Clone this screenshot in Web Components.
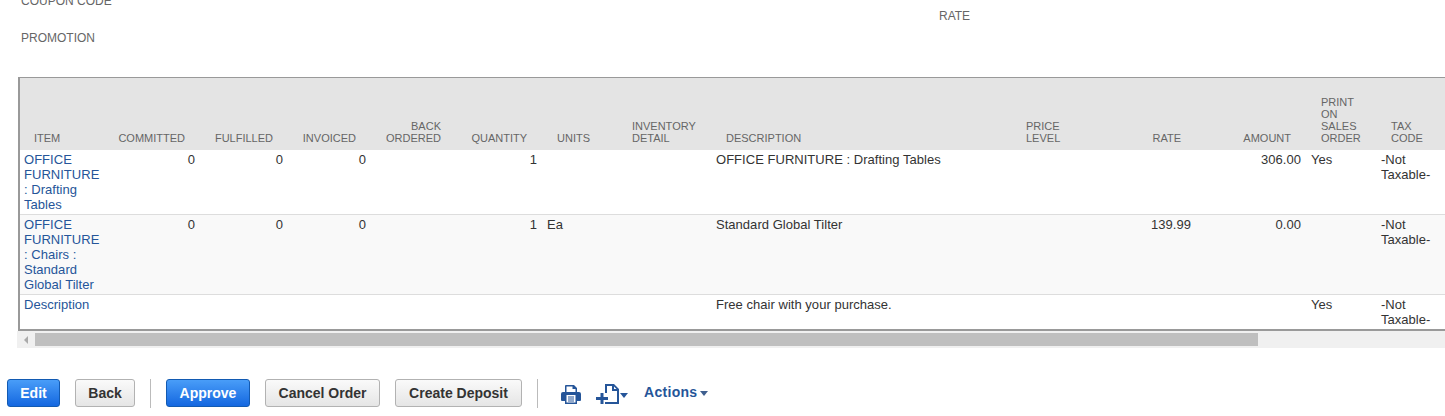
<!DOCTYPE html>
<html>
<head>
<meta charset="utf-8">
<style>
  html, body { margin: 0; height: 416px; overflow: hidden; background: #fff; }
  body { font-family: "Liberation Sans", Arial, sans-serif; }
</style>
</head>
<body>
<so-page>
  <so-fields slot="fields"></so-fields>
  <line-table slot="table"></line-table>
  <so-toolbar slot="toolbar">
    <so-button primary style="width:53px">Edit</so-button>
    <so-button style="width:60px">Back</so-button>
    <tool-sep></tool-sep>
    <so-button primary style="width:84px">Approve</so-button>
    <so-button style="width:115px">Cancel Order</so-button>
    <so-button style="width:127px">Create Deposit</so-button>
    <tool-sep></tool-sep>
    <tool-icons></tool-icons>
  </so-toolbar>
</so-page>

<script>
customElements.define('so-page', class SoPage extends HTMLElement {
  constructor() {
    super();
    this.attachShadow({mode: 'open'});
    this.shadowRoot.innerHTML = `
    <style>
      :host { display: flex; flex-direction: column; width: 1445px; height: 416px; overflow: hidden; }
    </style>
    <slot name="fields"></slot>
    <slot name="table"></slot>
    <slot name="toolbar"></slot>
    `
  }
})

customElements.define('so-fields', class SoFields extends HTMLElement {
  constructor() {
    super();
    this.attachShadow({mode: 'open'});
    this.shadowRoot.innerHTML = `
    <style>
      :host {
        display: grid;
        grid-template-columns: 918px 1fr;
        height: 77px;
        padding-left: 21px;
        box-sizing: border-box;
        font-size: 12px;
        line-height: 14px;
        color: #666;
      }
      .left { display: flex; flex-direction: column; gap: 23px; margin-top: -6px; }
      .right { padding-top: 9px; }
    </style>
    <div class="left"><div>COUPON CODE</div><div>PROMOTION</div></div>
    <div class="right"><div>RATE</div></div>
    `
  }
})

const COLUMNS = [
  ['ITEM', 84, 'l'], ['COMMITTED', 97, 'r'], ['FULFILLED', 88, 'r'], ['INVOICED', 83, 'r'],
  ['BACK<br>ORDERED', 85, 'r'], ['QUANTITY', 86, 'r'], ['UNITS', 75, 'l'], ['INVENTORY<br>DETAIL', 94, 'l'],
  ['DESCRIPTION', 300, 'l'], ['PRICE<br>LEVEL', 95, 'l'], ['RATE', 90, 'r'], ['AMOUNT', 110, 'r'],
  ['PRINT<br>ON<br>SALES<br>ORDER', 70, 'l'], ['TAX<br>CODE', 80, 'l']
]

const ROWS = [
  ['OFFICE FURNITURE : Drafting Tables', '0', '0', '0', '', '1', '', '', 'OFFICE FURNITURE : Drafting Tables', '', '', '306.00', 'Yes', '-Not Taxable-'],
  ['OFFICE FURNITURE : Chairs : Standard Global Tilter', '0', '0', '0', '', '1', 'Ea', '', 'Standard Global Tilter', '', '139.99', '0.00', '', '-Not Taxable-'],
  ['Description', '', '', '', '', '', '', '', 'Free chair with your purchase.', '', '', '', 'Yes', '-Not Taxable-']
]

customElements.define('line-table', class LineTable extends HTMLElement {
  constructor() {
    super();
    this.attachShadow({mode: 'open'});
    const cols = COLUMNS.map(c => `<col style="width:${c[1]}px">`).join('');
    const head = COLUMNS.map(c => `<th class="${c[2]}">${c[0]}</th>`).join('');
    const rows = ROWS.map(r => '<tr>' + r.map((v, i) =>
      `<td class="${COLUMNS[i][2]}${i == 0 ? ' link' : ''}">${v}</td>`).join('') + '</tr>').join('');
    this.shadowRoot.innerHTML = `
    <style>
      :host { display: block; margin-left: 17px; height: 271px; }
      .frame {
        width: 1444px;
        box-sizing: border-box;
        margin-left: 1px;
        border: solid #999;
        border-width: 1px 1px 2px 2px;
        height: 254px;
        overflow: hidden;
      }
      table {
        table-layout: fixed;
        width: 1437px;
        margin-left: -1px;
        border-collapse: collapse;
        font-size: 13px;
        letter-spacing: 0.03px;
        line-height: 15px;
        color: #333;
      }
      th {
        height: 72px;
        padding: 0 10px 6px 15px;
        box-sizing: border-box;
        background: #e4e4e4;
        color: #666;
        font-size: 11px;
        letter-spacing: 0;
        line-height: 12px;
        font-weight: normal;
        vertical-align: bottom;
      }
      th.r { padding: 0 15px 6px 0; }
      td { padding: 2px 5px 2px; vertical-align: top; border-bottom: 1px solid #ddd; }
      tr:nth-child(2) td { background: #f9f9f9; }
      tr:last-child td { border-bottom: 0; }
      .l { text-align: left; }
      .r { text-align: right; }
      .link { color: #255599; }
    </style>
    <div class="frame">
      <table>
        <colgroup>${cols}</colgroup>
        <thead><tr>${head}</tr></thead>
        <tbody>${rows}</tbody>
      </table>
    </div>
    <h-scrollbar></h-scrollbar>
    `
  }
})

customElements.define('h-scrollbar', class HScrollbar extends HTMLElement {
  constructor() {
    super();
    this.attachShadow({mode: 'open'});
    this.shadowRoot.innerHTML = `
    <style>
      :host {
        display: flex;
        align-items: center;
        height: 17px;
        background: #f0f0f0;
      }
      .arrow {
        width: 0; height: 0;
        margin-left: 7px;
        border: 4px solid transparent;
        border-left-width: 0;
        border-right: 4px solid #aaa;
      }
      .thumb { width: 1223px; height: 13px; margin-left: 7px; background: #bfbfbf; }
    </style>
    <div class="arrow"></div>
    <div class="thumb"></div>
    `
  }
})

customElements.define('so-toolbar', class SoToolbar extends HTMLElement {
  constructor() {
    super();
    this.attachShadow({mode: 'open'});
    this.shadowRoot.innerHTML = `
    <style>
      :host {
        display: flex;
        align-items: center;
        gap: 15px;
        padding: 30px 0 0 7px;
      }
    </style>
    <slot></slot>
    `
  }
})

customElements.define('so-button', class SoButton extends HTMLElement {
  constructor() {
    super();
    this.attachShadow({mode: 'open'});
    this.shadowRoot.innerHTML = `
    <style>
      :host {
        display: flex;
        align-items: center;
        justify-content: center;
        box-sizing: border-box;
        height: 28px;
        border: 1px solid #b2b2b2;
        border-radius: 3px;
        background: linear-gradient(#fafafa, #e5e5e5);
        color: #333;
        font-size: 14px;
        font-weight: bold;
      }
      :host([primary]) {
        border-color: #125ab2;
        background: linear-gradient(#499df8, #1467e0);
        color: #fff;
      }
    </style>
    <slot></slot>
    `
  }
})

customElements.define('tool-sep', class ToolSep extends HTMLElement {
  constructor() {
    super();
    this.attachShadow({mode: 'open'});
    this.shadowRoot.innerHTML = `
    <style>
      :host { display: block; width: 1px; height: 29px; margin-top: 1px; background: #bbb; }
    </style>
    `
  }
})

customElements.define('tool-icons', class ToolIcons extends HTMLElement {
  constructor() {
    super();
    this.attachShadow({mode: 'open'});
    this.shadowRoot.innerHTML = `
    <style>
      :host {
        display: flex;
        align-items: center;
        margin: 2px 0 0 8px;
        color: #255599;
        font-size: 14px;
        font-weight: bold;
      }
      svg { display: block; fill: currentColor; }
      .caret {
        width: 0; height: 0;
        border: 4.500px solid transparent;
        border-top: 5px solid currentColor;
        border-bottom-width: 0;
      }
      .print { margin-right: 15px; }
      .new { margin-right: 0; }
      .actions { margin-left: 16px; margin-top: -5px; letter-spacing: 0.3px; }
      .actions + .caret { margin-left: 3px; margin-top: -1px; border-top-color: #3f5f8f; }
    </style>
    <svg class="print" width="20" height="19" viewBox="0 0 20 19">
      <path fill-rule="evenodd" d="M5 0h8l3 3v4h2a2 2 0 0 1 2 2v6a1 1 0 0 1-1 1h-3v3H4v-3H1a1 1 0 0 1-1-1V9a2 2 0 0 1 2-2h2V1a1 1 0 0 1 1-1zM5.500 1.500V7h9V4h-3V1.500zM5.500 10V17.500h9V10z"/>
      <path d="M7 11.500h6v1H7zM7 13.500h6v1H7zM7 15.500h6v1H7z"/>
    </svg>
    <svg class="new" width="24" height="20" viewBox="0 0 24 20">
      <path fill-rule="evenodd" d="M9 0h9l5 5v15H9v-2h12V7h-5V2h-5v7H9zM18 2.500V5h2.500z"/>
      <path d="M4.500 9h3v4H12v3H7.500v4h-3v-4H0v-3h4.500z"/>
    </svg>
    <div class="caret" style="margin-top:3px"></div>
    <span class="actions">Actions</span>
    <div class="caret"></div>
    `
  }
})
</script>
</body>
</html>
